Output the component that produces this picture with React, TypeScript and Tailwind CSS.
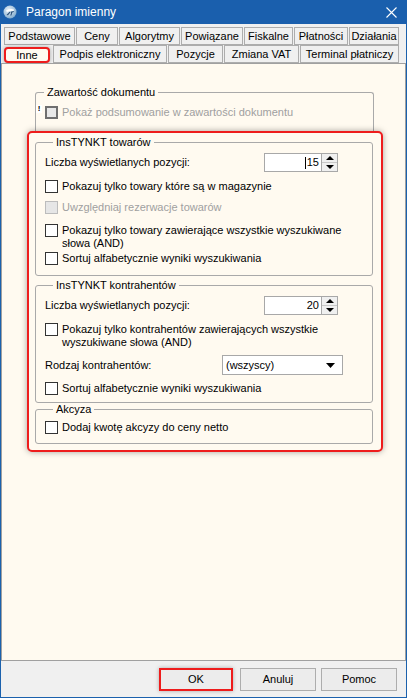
import React from "react";

function Check({ disabled = false }: { disabled?: boolean }) {
  return (
    <span
      className={
        disabled
          ? "block w-[13px] h-[13px] shrink-0 border border-[#bcbcbc] bg-[#e6e6e6]"
          : "block w-[13px] h-[13px] shrink-0 border border-[#333333] bg-white"
      }
    />
  );
}

function CheckRow({
  children,
  disabled = false,
  className = "",
}: {
  children: React.ReactNode;
  disabled?: boolean;
  className?: string;
}) {
  return (
    <div className={"flex items-center gap-[4px] whitespace-nowrap " + className}>
      <Check disabled={disabled} />
      <span className={disabled ? "text-[#a0a0a0]" : "text-black"}>{children}</span>
    </div>
  );
}

function CheckRow2({ l1, l2, className = "" }: { l1: string; l2: string; className?: string }) {
  return (
    <div className={"flex items-start gap-[4px] whitespace-nowrap " + className}>
      <Check />
      <span className="leading-[13px]">
        {l1}
        <br />
        {l2}
      </span>
    </div>
  );
}

function Spinner({ value, caret = false }: { value: string; caret?: boolean }) {
  return (
    <div className="flex h-[19px] w-[74px] shrink-0">
      <div className="flex-1 border border-[#a8a8a8] bg-white flex items-center justify-end pr-[2px]">
        {caret && <span className="block w-[1px] h-[12px] bg-black mr-[1px]" />}
        <span>{value}</span>
      </div>
      <div className="w-[16px] border border-l-0 border-[#a8a8a8] bg-[#f0f0f0] flex flex-col">
        <div className="flex-1 flex items-center justify-center">
          <svg width="8" height="4" viewBox="0 0 8 4">
            <path d="M0 4 L4 0 L8 4 Z" fill="#000" />
          </svg>
        </div>
        <div className="h-[1px] bg-[#c8c8c8]" />
        <div className="flex-1 flex items-center justify-center">
          <svg width="8" height="4" viewBox="0 0 8 4">
            <path d="M0 0 L8 0 L4 4 Z" fill="#000" />
          </svg>
        </div>
      </div>
    </div>
  );
}

function Tab({ label, w }: { label: string; w: string }) {
  return (
    <div className={"h-full border border-[#adadad] bg-[#f0f0f0] flex items-center justify-center whitespace-nowrap " + w}>
      {label}
    </div>
  );
}

export default function App() {
  return (
    <div className="w-[407px] h-[698px] flex flex-col text-[11px] leading-[13px] text-black font-['Liberation_Sans',Arial,sans-serif]">
      {/* Title bar */}
      <div className="h-[24px] bg-[#1a5fad] flex items-center shrink-0">
        <svg className="ml-[3px]" width="14" height="14" viewBox="0 0 14 14">
          <defs>
            <radialGradient id="lg" cx="40%" cy="35%" r="70%">
              <stop offset="0%" stopColor="#e8f2fa" />
              <stop offset="100%" stopColor="#7fa9cc" />
            </radialGradient>
          </defs>
          <circle cx="7" cy="7" r="6.5" fill="url(#lg)" />
          <path d="M3 5.5 Q7 3 11 4.5 L10.5 6 Q7 5 4 7 Z" fill="#ffffff" />
          <path d="M3.5 10 L6.5 6.8 L7.5 7.3 L5 10.3 Z" fill="#2a4f78" />
          <path d="M7.5 6.8 L11 6 L10.6 7.1 L9.3 7.4 L8.4 10.5 L7.3 10.5 L8.1 7.7 Z" fill="#2a4f78" />
        </svg>
        <span className="ml-[9px] text-white text-[12px] leading-[14px]">Paragon imienny</span>
        <div className="flex-1" />
        <svg className="mr-[10px]" width="11" height="11" viewBox="0 0 11 11">
          <path d="M0.5 0.5 L10.5 10.5 M10.5 0.5 L0.5 10.5" stroke="#ffffff" strokeWidth="1.1" />
        </svg>
      </div>

      {/* Body */}
      <div className="flex-1 flex flex-col bg-[#f0f0f0] border-x border-b border-[#1b61ad]">
        {/* Tabs */}
        <div className="pt-[3px] pl-[3px] shrink-0">
          <div className="flex gap-[1px] h-[18px]">
            <Tab label="Podstawowe" w="w-[71px]" />
            <Tab label="Ceny" w="w-[42px]" />
            <Tab label="Algorytmy" w="w-[61px]" />
            <Tab label="Powiązane" w="w-[62px]" />
            <Tab label="Fiskalne" w="w-[49px]" />
            <Tab label="Płatności" w="w-[54px]" />
            <Tab label="Działania" w="w-[50px]" />
          </div>
          <div className="flex h-[18px]">
            <div className="mt-[2px] h-[16px] w-[46px] border-2 border-[#ee1c1c] rounded-[4px] bg-[#fffaf0] flex items-center justify-center shadow-[0_0_4px_rgba(0,0,0,0.3)]">
              Inne
            </div>
            <div className="flex gap-[1px] h-full ml-[3px]">
              <Tab label="Podpis elektroniczny" w="w-[114px]" />
              <Tab label="Pozycje" w="w-[55px]" />
              <Tab label="Zmiana VAT" w="w-[75px]" />
              <Tab label="Terminal płatniczy" w="w-[99px]" />
            </div>
          </div>
        </div>

        {/* Panel */}
        <div className="flex-1 border border-[#a0a0a0] bg-[#fffaf0] pt-[21px]">
          {/* Zawartość dokumentu */}
          <fieldset className="min-w-0 ml-[33px] mr-[31px] border border-b-0 border-[#a9a9a9] rounded-t-[3px] pb-[12px]">
            <legend className="ml-[8px] px-[3px] leading-[14px]">Zawartość dokumentu</legend>
            <div className="mt-[7px] flex items-center h-[13px] whitespace-nowrap">
              <span className="w-[6px] h-[8px] bg-white flex items-center justify-center text-[8px] leading-[8px] font-bold text-black self-start -mt-[1px]">
                !
              </span>
              <span className="ml-[3px] block w-[13px] h-[13px] shrink-0 border-2 border-[#6f6f6f] bg-[#e8e8e8]" />
              <span className="ml-[4px] text-[#a0a0a0]">Pokaż podsumowanie w zawartości dokumentu</span>
            </div>
          </fieldset>

          {/* Red highlight */}
          <div className="ml-[25px] w-[356px] border-2 border-[#ee1c1c] rounded-[5px] bg-[#fffaf0] pt-[2px] pl-[6px] pr-[8px] pb-[6px] shadow-[0_0_6px_rgba(0,0,0,0.35)]">
            {/* InsTYNKT towarów */}
            <fieldset className="min-w-0 border border-[#a9a9a9] rounded-[3px] pl-[9px] pr-[34px] pb-[10px]">
              <legend className="ml-[8px] px-[3px] leading-[14px]">InsTYNKT towarów</legend>
              <div className="mt-[4px] h-[19px] flex items-center justify-between">
                <span>Liczba wyświetlanych pozycji:</span>
                <Spinner value="15" caret />
              </div>
              <CheckRow className="mt-[4px] h-[21px]">Pokazuj tylko towary które są w magazynie</CheckRow>
              <CheckRow className="h-[21px]" disabled>
                Uwzględniaj rezerwacje towarów
              </CheckRow>
              <CheckRow2
                className="mt-[6px]"
                l1="Pokazuj tylko towary zawierające wszystkie wyszukiwane"
                l2="słowa (AND)"
              />
              <CheckRow className="mt-[2px] h-[13px]">Sortuj alfabetycznie wyniki wyszukiwania</CheckRow>
            </fieldset>

            {/* InsTYNKT kontrahentów */}
            <fieldset className="min-w-0 mt-[2px] border border-[#a9a9a9] rounded-[3px] pl-[9px] pr-[34px] pb-[7px]">
              <legend className="ml-[8px] px-[3px] leading-[14px]">InsTYNKT kontrahentów</legend>
              <div className="mt-[4px] h-[19px] flex items-center justify-between">
                <span>Liczba wyświetlanych pozycji:</span>
                <Spinner value="20" />
              </div>
              <CheckRow2
                className="mt-[8px]"
                l1="Pokazuj tylko kontrahentów zawierających wszystkie"
                l2="wyszukiwane słowa (AND)"
              />
              <div className="mt-[6px] h-[20px] flex items-center">
                <span className="w-[177px] shrink-0">Rodzaj kontrahentów:</span>
                <div className="w-[121px] shrink-0 h-[20px] border border-[#a8a8a8] bg-white flex items-center pl-[3px] pr-[7px]">
                  <span className="flex-1">(wszyscy)</span>
                  <svg width="9" height="5" viewBox="0 0 9 5">
                    <path d="M0 0 L9 0 L4.5 5 Z" fill="#000" />
                  </svg>
                </div>
              </div>
              <CheckRow className="mt-[7px] h-[13px]">Sortuj alfabetycznie wyniki wyszukiwania</CheckRow>
            </fieldset>

            {/* Akcyza */}
            <fieldset className="min-w-0 -mt-[1px] border border-[#a9a9a9] rounded-[3px] pl-[9px] pb-[9px]">
              <legend className="ml-[8px] px-[3px] leading-[14px]">Akcyza</legend>
              <CheckRow className="mt-[5px] h-[13px]">Dodaj kwotę akcyzy do ceny netto</CheckRow>
            </fieldset>
          </div>
        </div>

        {/* Buttons */}
        <div className="h-[36px] shrink-0 flex items-start justify-end pt-[7px] pr-[9px]">
          <div className="w-[74px] h-[23px] border-2 border-[#ee1c1c] bg-[#ececec] flex items-center justify-center shadow-[0_0_4px_rgba(0,0,0,0.3)]">
            OK
          </div>
          <div className="ml-[7px] w-[76px] h-[23px] border border-[#adadad] bg-[#ececec] flex items-center justify-center">
            Anuluj
          </div>
          <div className="ml-[5px] w-[76px] h-[23px] border border-[#adadad] bg-[#ececec] flex items-center justify-center">
            Pomoc
          </div>
        </div>
      </div>
    </div>
  );
}
